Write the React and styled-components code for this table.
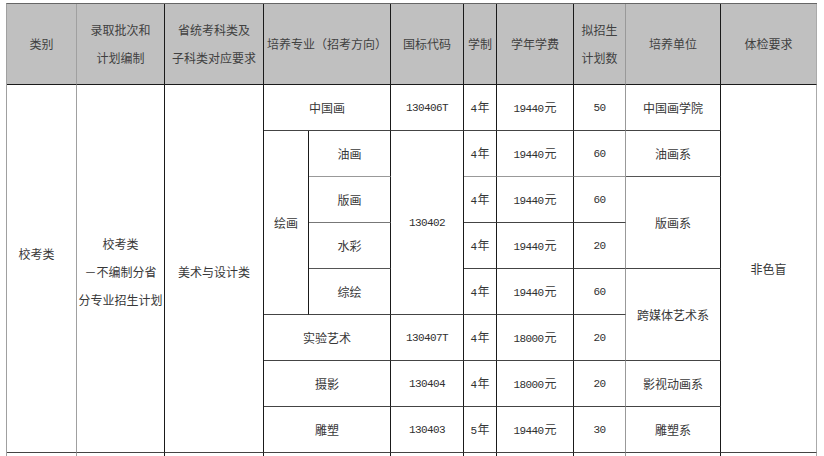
import React from 'react';
import styled, { createGlobalStyle } from 'styled-components';

const GlobalStyle = createGlobalStyle`
  html, body {
    margin: 0;
    padding: 0;
    background: #fff;
    overflow: hidden;
  }
  body {
    font-family: "Noto Sans CJK SC", "Liberation Sans", sans-serif;
  }
`;

const Page = styled.div`
  width: 824px;
  height: 456px;
  overflow: hidden;
  padding: 3px 0 0 6px;
  box-sizing: border-box;
`;

const Grid = styled.div`
  display: grid;
  grid-template-columns: 70px 88px 99px 45px 82px 73px 33px 77px 52px 95px 96px;
  grid-template-rows: 81px repeat(9, 46px);
  width: 811px;
  border-top: 1px solid #666;
  border-left: 1px solid #a0a0a0;
  box-sizing: border-box;
`;

const Cell = styled.div`
  grid-column: ${(p) => p.$col};
  grid-row: ${(p) => p.$row};
  display: flex;
  flex-direction: column;
  align-items: center;
  justify-content: center;
  box-sizing: border-box;
  border-right: 1px solid ${(p) => p.$rc || '#1a1a1a'};
  border-bottom: 1px solid ${(p) => p.$bc || '#444'};
  background: ${(p) => (p.$head ? '#c0c0c0' : '#fff')};
  color: ${(p) => (p.$head ? '#404040' : '#383838')};
  font-size: 12px;
  line-height: 28px;
  text-align: center;
  white-space: nowrap;
  padding: ${(p) => p.$pad || '0'};
`;

const Num = styled.span`
  font-family: "Liberation Mono", "DejaVu Sans Mono", monospace;
  font-size: 11px;
  letter-spacing: -0.6px;
  color: #303030;
  margin-right: ${(p) => (p.$unit ? '1px' : '0')};
`;

// right border colour per grid column line
const edge = {
  1: '#a0a0a0',
  9: '#999',
  11: '#aaa',
};

const H = ({ col, children }) => (
  <Cell $head $col={col} $row="1" $rc={edge[col.split('/')[1] - 1] || edge[col.split('/')[0]]} $bc="#1a1a1a">
    {children}
  </Cell>
);

const header = [
  ['1', ['类别']],
  ['2', ['录取批次和', '计划编制']],
  ['3', ['省统考科类及', '子科类对应要求']],
  ['4 / 6', ['培养专业（招考方向）']],
  ['6', ['国标代码']],
  ['7', ['学制']],
  ['8', ['学年学费']],
  ['9', ['拟招生', '计划数']],
  ['10', ['培养单位']],
  ['11', ['体检要求']],
];

const rows = [
  { row: 2, code: '130406T', years: '4', fee: '19440', count: '50' },
  { row: 3, years: '4', fee: '19440', count: '60' },
  { row: 4, years: '4', fee: '19440', count: '60' },
  { row: 5, years: '4', fee: '19440', count: '20' },
  { row: 6, years: '4', fee: '19440', count: '60' },
  { row: 7, code: '130407T', years: '4', fee: '18000', count: '20' },
  { row: 8, code: '130404', years: '4', fee: '18000', count: '20' },
  { row: 9, code: '130403', years: '5', fee: '19440', count: '30' },
];

const majors = [
  { col: '4 / 6', row: '2', name: '中国画' },
  { col: '5', row: '3', name: '油画', bc: '#999' },
  { col: '5', row: '4', name: '版画', bc: '#777' },
  { col: '5', row: '5', name: '水彩', bc: '#555' },
  { col: '5', row: '6', name: '综绘' },
  { col: '4 / 6', row: '7', name: '实验艺术' },
  { col: '4 / 6', row: '8', name: '摄影' },
  { col: '4 / 6', row: '9', name: '雕塑' },
];

const units = [
  { row: '2', name: '中国画学院' },
  { row: '3', name: '油画系', bc: '#555' },
  { row: '4 / 6', name: '版画系' },
  { row: '6 / 8', name: '跨媒体艺术系' },
  { row: '8', name: '影视动画系' },
  { row: '9', name: '雕塑系' },
];

const App = () => {
  return (
    <>
      <GlobalStyle />
      <Page>
        <Grid>
          {header.map(([col, lines]) => (
            <H key={col} col={col}>
              {lines.map((l) => (
                <div key={l}>{l}</div>
              ))}
            </H>
          ))}

          <Cell $col="1" $row="2 / 10" $rc={edge[1]} $pad="0 10px 30px 0">
            校考类
          </Cell>
          <Cell $col="2" $row="2 / 10" $pad="6px 0 0 0">
            <div>校考类</div>
            <div>－不编制分省</div>
            <div>分专业招生计划</div>
          </Cell>
          <Cell $col="3" $row="2 / 10" $pad="6px 0 0 0">
            美术与设计类
          </Cell>

          <Cell $col="4" $row="3 / 7">
            绘画
          </Cell>
          {majors.map((m) => (
            <Cell key={m.name} $col={m.col} $row={m.row} $bc={m.bc}>
              {m.name}
            </Cell>
          ))}

          <Cell $col="6" $row="3 / 7">
            <Num>130402</Num>
          </Cell>

          {rows.map((r) => (
            <React.Fragment key={r.row}>
              {r.code && (
                <Cell $col="6" $row={String(r.row)}>
                  <Num>{r.code}</Num>
                </Cell>
              )}
              <Cell $col="7" $row={String(r.row)} $bc={r.row === 3 ? '#999' : undefined}>
                <span>
                  <Num $unit>{r.years}</Num>年
                </span>
              </Cell>
              <Cell $col="8" $row={String(r.row)} $bc={r.row === 3 ? '#999' : undefined}>
                <span>
                  <Num $unit>{r.fee}</Num>元
                </span>
              </Cell>
              <Cell $col="9" $row={String(r.row)} $rc={edge[9]} $bc={r.row === 3 ? '#999' : undefined}>
                <Num>{r.count}</Num>
              </Cell>
            </React.Fragment>
          ))}

          {units.map((u) => (
            <Cell key={u.name} $col="10" $row={u.row} $bc={u.bc}>
              {u.name}
            </Cell>
          ))}

          <Cell $col="11" $row="2 / 10" $rc={edge[11]}>
            非色盲
          </Cell>

          {/* next group, cut off by the window */}
          <Cell $col="1" $row="10" $rc={edge[1]} />
          <Cell $col="2" $row="10" />
          <Cell $col="3" $row="10" />
          <Cell $col="4 / 6" $row="10" />
          <Cell $col="6" $row="10" />
          <Cell $col="7" $row="10" />
          <Cell $col="8" $row="10" />
          <Cell $col="9" $row="10" $rc={edge[9]} />
          <Cell $col="10" $row="10" />
          <Cell $col="11" $row="10" $rc={edge[11]} />
        </Grid>
      </Page>
    </>
  );
};

export default App;
